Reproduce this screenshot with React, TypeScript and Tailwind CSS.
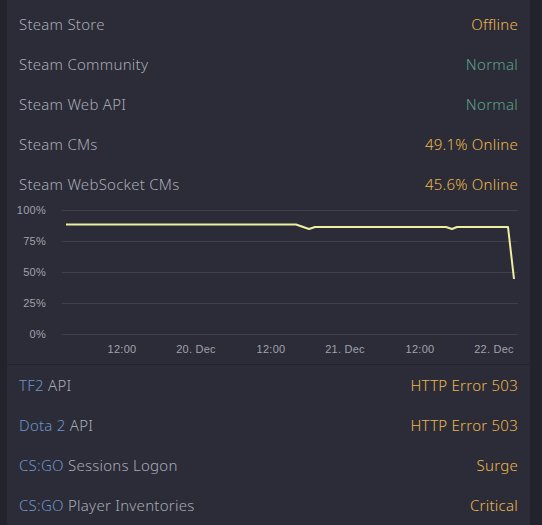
import React from "react";

type Row = {
  prefix?: string;
  label: string;
  value: string;
  tone: "yellow" | "green";
};

const topRows: Row[] = [
  { label: "Steam Store", value: "Offline", tone: "yellow" },
  { label: "Steam Community", value: "Normal", tone: "green" },
  { label: "Steam Web API", value: "Normal", tone: "green" },
  { label: "Steam CMs", value: "49.1% Online", tone: "yellow" },
  { label: "Steam WebSocket CMs", value: "45.6% Online", tone: "yellow" },
];

const bottomRows: Row[] = [
  { prefix: "TF2", label: " API", value: "HTTP Error 503", tone: "yellow" },
  { prefix: "Dota 2", label: " API", value: "HTTP Error 503", tone: "yellow" },
  { prefix: "CS:GO", label: " Sessions Logon", value: "Surge", tone: "yellow" },
  { prefix: "CS:GO", label: " Player Inventories", value: "Critical", tone: "yellow" },
];

const StatusRow = ({ row }: { row: Row }) => (
  <div className="h-10 flex items-center justify-between px-3">
    <span className="text-[#a8aab6]">
      {row.prefix && <span className="text-[#6e93cb]">{row.prefix}</span>}
      {row.label}
    </span>
    <span className={row.tone === "yellow" ? "text-[#ebb84c]" : "text-[#5da287]"}>
      {row.value}
    </span>
  </div>
);

const gridY = [6, 37, 68, 99, 130];
const yLabels = ["100%", "75%", "50%", "25%", "0%"];
const xLabels = [
  { x: 115, t: "12:00" },
  { x: 189, t: "20. Dec" },
  { x: 264, t: "12:00" },
  { x: 338, t: "21. Dec" },
  { x: 413, t: "12:00" },
  { x: 487, t: "22. Dec" },
];

const points = "59,20.5 289,20.5 302,25 308,23 439,23 445,25 450,23 501,23 507,75";

const Chart = () => (
  <svg width="523" height="160" viewBox="0 0 523 160" className="block">
    {gridY.map((y, i) => (
      <g key={y}>
        <line x1="55" x2="511" y1={y + 0.5} y2={y + 0.5} stroke="#3d3f4b" strokeWidth="1" />
        <text
          x="39"
          y={y + 4}
          textAnchor="end"
          fontSize="11"
          fill="#a0a2ac"
          fontFamily="'Liberation Sans', Arial, sans-serif"
        >
          {yLabels[i]}
        </text>
      </g>
    ))}
    {xLabels.map((l) => (
      <text
        key={l.x}
        x={l.x}
        y="149"
        textAnchor="middle"
        fontSize="11"
        fill="#a0a2ac"
        fontFamily="'Liberation Sans', Arial, sans-serif"
      >
        {l.t}
      </text>
    ))}
    <polyline points={points} fill="none" stroke="#eeeea0" strokeWidth="2" strokeLinejoin="round" />
  </svg>
);

export default function App() {
  return (
    <div className="w-[542px] h-[525px] bg-[#22232c] overflow-hidden font-['Noto_Sans',sans-serif] font-light text-[15px] tracking-[0.25px]">
      <div className="mx-[7px] w-[523px] bg-[#2b2c37] pt-1 min-h-full">
        {topRows.map((r) => (
          <StatusRow key={r.label} row={r} />
        ))}
        <Chart />
        <div className="border-t border-[#23242c]">
          {bottomRows.map((r, i) => (
            <StatusRow key={i} row={r} />
          ))}
        </div>
      </div>
    </div>
  );
}
